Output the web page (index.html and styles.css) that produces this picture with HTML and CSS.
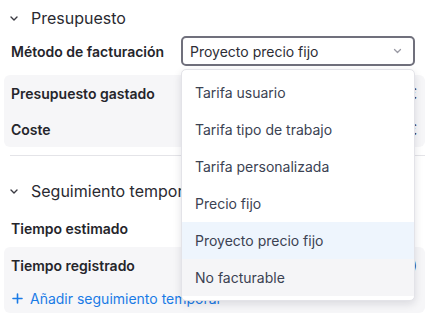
FILE: index.html
```html
<!DOCTYPE html>
<html lang="es">
<head>
  <meta charset="UTF-8">
  <meta name="viewport" content="width=device-width, initial-scale=1.0">
  <title>Presupuesto</title>
  <link rel="stylesheet" href="styles.css">
</head>
<body>
  <section class="section">
    <div class="section-title">
      <svg class="chevron" width="8" height="5" viewBox="0 0 8 5"><path d="M1 1l3 3 3-3" fill="none" stroke="currentColor" stroke-width="1.4" stroke-linecap="round" stroke-linejoin="round"/></svg>
      <span>Presupuesto</span>
    </div>

    <div class="field">
      <span class="label">Método de facturación</span>
      <div class="select-wrap">
        <div class="select">
          <span>Proyecto precio fijo</span>
          <svg width="9" height="6" viewBox="0 0 9 6"><path d="M1.5 1.5l3 3 3-3" fill="none" stroke="#9a9aa4" stroke-width="1.3" stroke-linecap="round" stroke-linejoin="round"/></svg>
        </div>
        <ul class="menu">
          <li>Tarifa usuario</li>
          <li>Tarifa tipo de trabajo</li>
          <li>Tarifa personalizada</li>
          <li>Precio fijo</li>
          <li class="selected">Proyecto precio fijo</li>
          <li class="hover">No facturable</li>
        </ul>
      </div>
    </div>

    <div class="panel">
      <div class="row">
        <span class="label">Presupuesto gastado</span>
        <span class="value">0,00 €</span>
      </div>
      <div class="row">
        <span class="label">Coste</span>
        <span class="value">0,00 €</span>
      </div>
    </div>
  </section>

  <hr class="divider">

  <section class="section">
    <div class="section-title">
      <svg class="chevron" width="8" height="5" viewBox="0 0 8 5"><path d="M1 1l3 3 3-3" fill="none" stroke="currentColor" stroke-width="1.4" stroke-linecap="round" stroke-linejoin="round"/></svg>
      <span>Seguimiento temporal</span>
    </div>

    <div class="row plain">
      <span class="label">Tiempo estimado</span>
    </div>

    <div class="panel">
      <div class="row">
        <span class="label">Tiempo registrado</span>
        <span class="value">0h (0%)</span>
      </div>
      <a class="add-link" href="#">
        <svg width="11" height="11" viewBox="0 0 11 11"><path d="M5.5 1v9M1 5.5h9" stroke="currentColor" stroke-width="1.6" stroke-linecap="round"/></svg>
        Añadir seguimiento temporal
      </a>
    </div>
  </section>
</body>
</html>
```

FILE: styles.css
```css
body {
  font-family: Inter, "Noto Sans", sans-serif;
  color: #24242b;
  margin: 0;
  padding: 0 9px 0 4px;
  background: #fff;
  overflow: hidden;
}
.section-title {
  display: flex;
  align-items: center;
  height: 36px;
  padding-left: 6px;
  font-size: 16px;
  color: #2a2a31;
}
.chevron {
  margin-right: 13px;
  color: #3a3a42;
}
.label {
  font-size: 14px;
  font-weight: 600;
  color: #25252b;
}
.field {
  display: grid;
  grid-template-columns: 170px 1fr;
  align-items: center;
  padding: 0 10px 0 7px;
  height: 30px;
  margin-bottom: 9px;
}
.select-wrap {
  position: relative;
}
.select {
  display: flex;
  align-items: center;
  justify-content: space-between;
  height: 30px;
  box-sizing: border-box;
  border: 2px solid #70707c;
  border-radius: 5px;
  padding: 0 11px 0 7px;
  font-size: 14px;
  color: #2d2d35;
}
.menu {
  position: absolute;
  top: 33px;
  left: 0;
  right: 0;
  margin: 0;
  padding: 4px 0;
  list-style: none;
  background: #fff;
  border: 1px solid #e3e3e8;
  border-radius: 5px;
  box-shadow: 0 3px 8px rgba(20, 20, 40, 0.12);
  z-index: 2;
  overflow: hidden;
}
.menu li {
  height: 37px;
  line-height: 37px;
  padding-left: 13px;
  font-size: 14px;
  color: #3b4252;
}
.menu li.selected {
  background: #eef5fd;
}
.menu li.hover {
  background: #f5f5f7;
}
.panel {
  background: #f6f6f8;
  border-radius: 6px;
}
.row {
  display: flex;
  align-items: center;
  justify-content: space-between;
  height: 36px;
  padding: 0 8px 0 7px;
}
.row.plain {
  height: 38px;
  margin-bottom: 0;
}
.value {
  font-size: 14px;
  color: #25252b;
}
.divider {
  border: none;
  border-top: 1px solid #e4e4e8;
  margin: 8px 0 17px 6px;
}
.add-link {
  display: flex;
  align-items: center;
  gap: 7px;
  height: 30px;
  padding-left: 8px;
  font-size: 14px;
  color: #1a7be6;
  text-decoration: none;
}
```
